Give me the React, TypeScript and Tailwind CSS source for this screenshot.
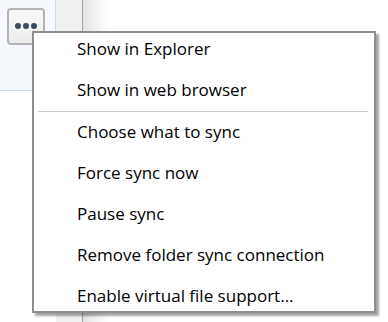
const items = [
  'Show in Explorer',
  'Show in web browser',
  null,
  'Choose what to sync',
  'Force sync now',
  'Pause sync',
  'Remove folder sync connection',
  'Enable virtual file support...',
];

function MoreButton() {
  return (
    <div className="w-[38px] h-[37px] rounded-[4px] border-2 border-[#b4b4b4] bg-gradient-to-b from-[#f8f8f8] to-[#ececec] flex items-start justify-center pt-[13px] gap-[2px]">
      <span className="w-[6px] h-[6px] rounded-full bg-[#3b4a5e]" />
      <span className="w-[6px] h-[6px] rounded-full bg-[#3b4a5e]" />
      <span className="w-[6px] h-[6px] rounded-full bg-[#3b4a5e]" />
    </div>
  );
}

export default function App() {
  return (
    <div
      className="relative w-[388px] h-[322px] overflow-hidden bg-white flex"
      style={{ fontFamily: '"Open Sans", "Noto Sans", sans-serif' }}
    >
      {/* background: account panel, gutter column, scroll area */}
      <div className="w-[56px] flex flex-col">
        <div className="h-[91px] bg-[#f5f9fd] border-r border-b border-[#c6dcf0] pl-[7px] pt-[8px]">
          <MoreButton />
        </div>
      </div>
      <div className="w-[27px] bg-[#f0f0f0] border-r border-[#a3a3a3]" />
      <div className="w-[26px] bg-gradient-to-r from-[#e4e4e4] to-white" />
      <div className="flex-1 bg-white" />

      {/* context menu */}
      <div className="absolute left-[32px] top-[31px] w-[344px] h-[282px] border-2 border-[#8e8e8e] bg-white shadow-[3px_3px_2px_rgba(0,0,0,0.35)] pt-[4px]">
        {items.map((label, i) =>
          label === null ? (
            <div key={i} className="h-[1px] bg-[#cdcdcd] ml-[4px] mr-[6px] mb-[8px]" />
          ) : (
            <div
              key={i}
              className={`${i === 1 ? 'h-[33px]' : 'h-[41px]'} pl-[43px] text-[17px] leading-[24px] text-black whitespace-nowrap`}
            >
              {label}
            </div>
          ),
        )}
      </div>
    </div>
  );
}
